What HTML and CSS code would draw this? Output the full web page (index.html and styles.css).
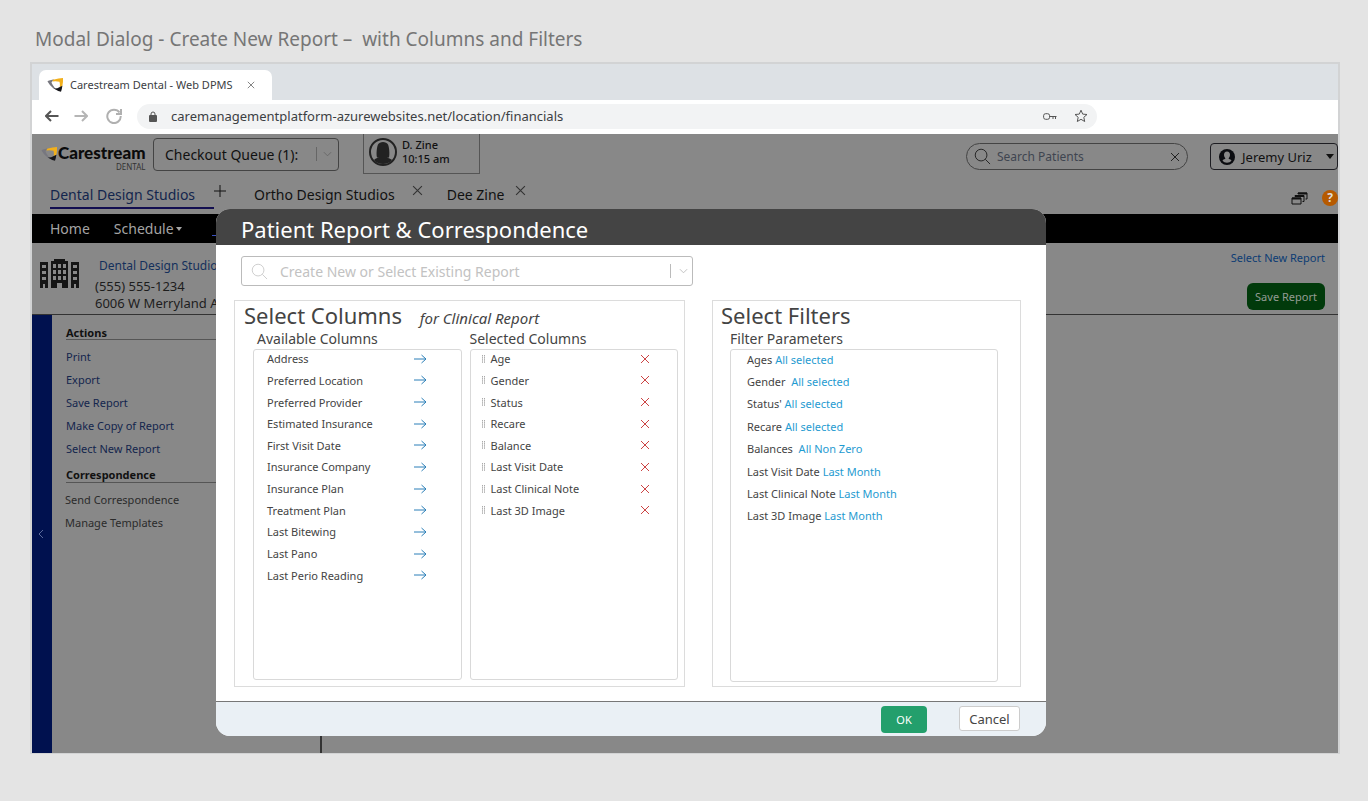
FILE: index.html
```html
<!DOCTYPE html>
<html lang="en">
<head>
<meta charset="utf-8">
<title>Carestream Dental - Web DPMS</title>
<link rel="stylesheet" href="styles.css">
</head>
<body>
<svg class="defs" aria-hidden="true">
  <symbol id="mark" viewBox="0 0 17 14"><path d="M.5 3.500Q.5 2.500 7 1.200L4.500 4.200Q4.800 6 9 11.500L6.500 10.500Q2 6.500.5 3.500z" class="mark-grey"/><path d="M6 1.700Q12 .3 16 0 16.300 4 15.300 8l-2.500 1.500Q13.300 6 12.500 3.700 9 3 5.500 3.500z" class="mark-gold"/><path d="M12.800 9 15.400 7.700Q15 11 14 13.800 10.500 13 6.800 10.500 10 10.800 12.800 9z" class="mark-dark"/></symbol>
  <symbol id="arrow" viewBox="0 0 14 10"><path d="M1 5h12M8.500 1 13 5 8.500 9"/></symbol>
  <symbol id="cross" viewBox="0 0 10 10"><path d="m1 1 8 8M9 1 1 9"/></symbol>
  <symbol id="chevron" viewBox="0 0 10 6"><path d="m1 1 4 4 4-4"/></symbol>
  <symbol id="lens" viewBox="0 0 18 18"><circle cx="7.500" cy="7.500" r="6.200"/><path d="m12 12 5 5"/></symbol>
  <symbol id="grip" viewBox="0 0 5 8"><path d="M1.500 0v8M3.500 0v8" stroke-dasharray="1.500 .6"/></symbol>
</svg>

<h1 class="page-title">Modal Dialog - Create New Report – &nbsp;with Columns and Filters</h1>

<div class="browser">
  <div class="tabstrip">
    <div class="browser-tab">
      <svg class="mark"><use href="#mark"/></svg>
      <span>Carestream Dental - Web DPMS</span>
      <button class="icon-btn" aria-label="Close tab"><svg class="tab-close"><use href="#cross"/></svg></button>
    </div>
  </div>
  <div class="toolbar">
    <button class="icon-btn" aria-label="Back"><svg class="nav-ico" viewBox="0 0 14 12"><path d="M13.500 6H1M6 1 1 6l5 5"/></svg></button>
    <button class="icon-btn" aria-label="Forward"><svg class="nav-ico faint" viewBox="0 0 14 12"><path d="M.5 6H13M8 1l5 5-5 5"/></svg></button>
    <button class="icon-btn" aria-label="Reload"><svg class="reload" viewBox="0 0 16 16"><path d="M13.500 4.500A6.700 6.700 0 1 0 14.700 8"/><path d="M15 1v5h-5"/></svg></button>
    <div class="address">
      <svg class="lock" viewBox="0 0 8 11"><rect y="4" width="8" height="7" rx="1"/><path d="M2 4.500V3a2 2 0 0 1 4 0v1.500"/></svg>
      <input class="url" aria-label="Address" value="caremanagementplatform-azurewebsites.net/location/financials">
      <svg class="key" viewBox="0 0 14 7"><rect x=".6" y=".7" width="6" height="5.600" rx="2"/><path d="M6.500 3.500h7M10 3.500V6M12.500 3.500V6"/></svg>
      <svg class="star" viewBox="0 0 14 14"><path d="m7 1.200 1.700 3.900 4.300.4-3.200 2.800.9 4.200L7 10.300l-3.700 2.200.9-4.200L1 5.500l4.300-.4z"/></svg>
    </div>
  </div>

  <div class="app">
    <header class="topbar">
      <div class="logo">
        <svg class="mark"><use href="#mark"/></svg>
        <div class="logo-text"><b>Carestream</b><small>DENTAL</small></div>
      </div>
      <div class="queue">
        <select aria-label="Checkout queue"><option>Checkout Queue (1):</option></select>
        <svg class="chev"><use href="#chevron"/></svg>
      </div>
      <div class="patient">
        <svg class="avatar" viewBox="0 0 28 28"><circle cx="14" cy="14" r="13"/><path class="solid" d="M8 19.500c-1-4 0-11 1-13 1.500-3.500 8.500-3.500 10 0 1 2 2 9 1 13l-2 .3c3 .6 4.500 1.700 5 2.200-4 5.300-14 5.300-18 0 1-1.200 2.500-1.800 5-2.200z"/></svg>
        <div>D. Zine<br>10:15 am</div>
      </div>
      <div class="search">
        <svg class="lens"><use href="#lens"/></svg>
        <input type="text" aria-label="Search patients" placeholder="Search Patients">
        <button class="icon-btn" aria-label="Clear"><svg class="x10"><use href="#cross"/></svg></button>
      </div>
      <button class="user">
        <svg class="user-ico" viewBox="0 0 16 16"><circle cx="8" cy="8" r="8"/><path d="M8 2.500c2 0 3 1.400 3 3.300 0 1.500-.6 2.700-1.400 3.400 0 1 2.400 1.200 2.900 2.300-2 3-7 3-9 0 .5-1.100 2.900-1.300 2.900-2.300C5.600 8.500 5 7.300 5 5.800c0-1.900 1-3.300 3-3.300z"/></svg>
        <span>Jeremy Uriz</span><i class="caret"></i>
      </button>
    </header>

    <div class="tabs">
      <a href="#" class="tab current">Dental Design Studios</a>
      <button class="icon-btn mini" aria-label="Add tab"><svg class="plus" viewBox="0 0 12 12"><path d="M6 0v12M0 6h12"/></svg></button>
      <a href="#" class="tab second">Ortho Design Studios</a>
      <button class="icon-btn mini" aria-label="Close Ortho Design Studios"><svg class="x11"><use href="#cross"/></svg></button>
      <a href="#" class="tab third">Dee Zine</a>
      <button class="icon-btn mini" aria-label="Close Dee Zine"><svg class="x11"><use href="#cross"/></svg></button>
      <div class="tools">
        <button class="icon-btn" aria-label="Windows"><svg class="windows" viewBox="0 0 17 13"><path d="M1 6h9v6H1z"/><path d="M4 4.500V3.500h9v6h-1.500M7 2V1h9v6h-1.500"/><path class="bar" d="M1 6.500h9M4 4h9M7 1.500h9"/></svg></button>
        <button class="help" aria-label="Help">?</button>
      </div>
    </div>

    <nav class="menu"><a href="#">Home</a><a href="#">Schedule<i class="caret"></i></a><a href="#" class="menu-current" aria-label="Current section"></a></nav>

    <section class="office">
      <svg class="building" viewBox="0 0 39 30"><path d="M0 3h8v26H5v-4H3v4H0zM11 2h3V0h11v2h3v27h-6v-5h-5v5h-6zM31 3h8v26h-3v-4h-2v4h-3z"/><path class="panes" d="M2 6h4v3H2zM2 12h4v3H2zM2 18h4v3H2zM13 5h3v4h-3zM18 5h3v4h-3zM23 5h3v4h-3zM13 11h3v4h-3zM18 11h3v4h-3zM23 11h3v4h-3zM13 17h3v4h-3zM18 17h3v4h-3zM23 17h3v4h-3zM33 6h4v3h-4zM33 12h4v3h-4zM33 18h4v3h-4z"/></svg>
      <address><a href="#">Dental Design Studios</a>(555) 555-1234<br>6006 W Merryland Ave</address>
      <div class="office-actions"><a href="#">Select New Report</a><button class="save">Save Report</button></div>
    </section>

    <div class="work">
      <button class="rail" aria-label="Collapse panel"><svg class="rail-ico" viewBox="0 0 6 10"><path d="M5 1 1 5l4 4"/></svg></button>
      <aside class="side">
        <h2>Actions</h2>
        <a href="#">Print</a><a href="#">Export</a><a href="#">Save Report</a><a href="#">Make Copy of Report</a><a href="#">Select New Report</a>
        <h2>Correspondence</h2>
        <a href="#" class="plain">Send Correspondence</a><a href="#" class="plain">Manage Templates</a>
      </aside>
    </div>

    <div class="dialog" role="dialog" aria-labelledby="dialog-title">
      <h2 class="dialog-title" id="dialog-title">Patient Report &amp; Correspondence</h2>
      <div class="dialog-body">
        <div class="report-pick">
          <svg class="lens"><use href="#lens"/></svg>
          <input type="text" aria-label="Report" placeholder="Create New or Select Existing Report">
          <button class="icon-btn" aria-label="Show reports"><svg class="chev"><use href="#chevron"/></svg></button>
        </div>
        <div class="panels">
          <section class="panel columns">
            <h3>Select Columns <em>for Clinical Report</em></h3>
            <div class="lists">
              <div class="group">
                <h4>Available Columns</h4>
                <div class="box">
                  <ul class="available">
                    <li>Address<button class="icon-btn" aria-label="Add Address"><svg><use href="#arrow"/></svg></button></li>
                    <li>Preferred Location<button class="icon-btn" aria-label="Add Preferred Location"><svg><use href="#arrow"/></svg></button></li>
                    <li>Preferred Provider<button class="icon-btn" aria-label="Add Preferred Provider"><svg><use href="#arrow"/></svg></button></li>
                    <li>Estimated Insurance<button class="icon-btn" aria-label="Add Estimated Insurance"><svg><use href="#arrow"/></svg></button></li>
                    <li>First Visit Date<button class="icon-btn" aria-label="Add First Visit Date"><svg><use href="#arrow"/></svg></button></li>
                    <li>Insurance Company<button class="icon-btn" aria-label="Add Insurance Company"><svg><use href="#arrow"/></svg></button></li>
                    <li>Insurance Plan<button class="icon-btn" aria-label="Add Insurance Plan"><svg><use href="#arrow"/></svg></button></li>
                    <li>Treatment Plan<button class="icon-btn" aria-label="Add Treatment Plan"><svg><use href="#arrow"/></svg></button></li>
                    <li>Last Bitewing<button class="icon-btn" aria-label="Add Last Bitewing"><svg><use href="#arrow"/></svg></button></li>
                    <li>Last Pano<button class="icon-btn" aria-label="Add Last Pano"><svg><use href="#arrow"/></svg></button></li>
                    <li>Last Perio Reading<button class="icon-btn" aria-label="Add Last Perio Reading"><svg><use href="#arrow"/></svg></button></li>
                  </ul>
                </div>
              </div>
              <div class="group">
                <h4>Selected Columns</h4>
                <div class="box">
                  <ul class="selected">
                    <li><svg class="grip"><use href="#grip"/></svg>Age<button class="icon-btn" aria-label="Remove Age"><svg><use href="#cross"/></svg></button></li>
                    <li><svg class="grip"><use href="#grip"/></svg>Gender<button class="icon-btn" aria-label="Remove Gender"><svg><use href="#cross"/></svg></button></li>
                    <li><svg class="grip"><use href="#grip"/></svg>Status<button class="icon-btn" aria-label="Remove Status"><svg><use href="#cross"/></svg></button></li>
                    <li><svg class="grip"><use href="#grip"/></svg>Recare<button class="icon-btn" aria-label="Remove Recare"><svg><use href="#cross"/></svg></button></li>
                    <li><svg class="grip"><use href="#grip"/></svg>Balance<button class="icon-btn" aria-label="Remove Balance"><svg><use href="#cross"/></svg></button></li>
                    <li><svg class="grip"><use href="#grip"/></svg>Last Visit Date<button class="icon-btn" aria-label="Remove Last Visit Date"><svg><use href="#cross"/></svg></button></li>
                    <li><svg class="grip"><use href="#grip"/></svg>Last Clinical Note<button class="icon-btn" aria-label="Remove Last Clinical Note"><svg><use href="#cross"/></svg></button></li>
                    <li><svg class="grip"><use href="#grip"/></svg>Last 3D Image<button class="icon-btn" aria-label="Remove Last 3D Image"><svg><use href="#cross"/></svg></button></li>
                  </ul>
                </div>
              </div>
            </div>
          </section>
          <section class="panel filters">
            <h3>Select Filters</h3>
            <h4>Filter Parameters</h4>
            <div class="box">
              <ul class="params">
                <li>Ages <a href="#">All selected</a></li>
                <li>Gender &nbsp;<a href="#">All selected</a></li>
                <li>Status' <a href="#">All selected</a></li>
                <li>Recare <a href="#">All selected</a></li>
                <li>Balances &nbsp;<a href="#">All Non Zero</a></li>
                <li>Last Visit Date <a href="#">Last Month</a></li>
                <li>Last Clinical Note <a href="#">Last Month</a></li>
                <li>Last 3D Image <a href="#">Last Month</a></li>
              </ul>
            </div>
          </section>
        </div>
      </div>
      <footer class="dialog-foot"><button class="ok">OK</button><button class="cancel">Cancel</button></footer>
    </div>
  </div>
</div>
</body>
</html>
```
FILE: styles.css
```css
* { box-sizing: border-box; }
body {
  margin: 0;
  min-height: 100vh;
  padding: 24px 28px 47px 30px;
  display: flex;
  flex-direction: column;
  background: #e4e4e4;
  font-family: "Noto Sans", "Open Sans", sans-serif;
  font-size: 12px;
  color: #111;
}
h1, h2, h3, h4, ul { margin: 0; padding: 0; font-weight: 400; }
ul { list-style: none; }
a { color: inherit; text-decoration: none; }
button, input, select { font: inherit; color: inherit; margin: 0; padding: 0; border: 0; background: none; outline: 0; min-width: 0; }
svg { fill: none; stroke: currentColor; flex: none; display: block; }
.defs { position: absolute; width: 0; height: 0; }
.icon-btn { display: flex; align-items: center; flex: none; }

.page-title { padding-left: 5px; font-size: 19px; line-height: 30px; color: #767676; margin-bottom: 8px; }

.browser { flex: 1; display: flex; flex-direction: column; border: 2px solid #d2d3d4; border-bottom-width: 1px; background: #fff; }
.tabstrip { height: 36px; background: #dde1e5; padding: 6px 0 0 7px; display: flex; }
.browser-tab { display: flex; align-items: center; width: 233px; padding: 0 17px 1px 8px; background: #fff; border-radius: 7px 7px 0 0; font-size: 11px; color: #3c4043; white-space: nowrap; }
.mark { width: 17px; height: 14px; margin-right: 6px; }
.mark-grey { fill: #77777f; stroke: none; }
.mark-gold { fill: #f2b01c; stroke: none; }
.mark-dark { fill: #15151a; stroke: none; }
.browser-tab .icon-btn { margin-left: auto; }
.tab-close { width: 8px; height: 8px; color: #666; }
.toolbar { height: 34px; display: flex; align-items: center; padding: 0 0 2px 13px; color: #555; }
.nav-ico { width: 14px; height: 12px; margin-right: 15px; stroke-width: 2; }
.faint { color: #b5b5b5; }
.reload { width: 16px; height: 16px; margin: 0 15px 0 3px; color: #b0b0b0; stroke-width: 2; }
.address { display: flex; align-items: center; width: 960px; height: 25px; padding: 0 9px 0 12px; border-radius: 13px; background: #f2f3f4; }
.lock { width: 8px; height: 11px; }
.lock rect { fill: #555; stroke: none; }
.url { flex: 1; margin-left: 14px; font-size: 13px; color: #3c4043; }
.key { width: 14px; height: 7px; margin-right: 17px; }
.star { width: 14px; height: 14px; stroke-width: 1; }

.app { position: relative; flex: 1; display: flex; flex-direction: column; background: #888; overflow: hidden; }
.topbar { display: flex; height: 40px; padding-left: 9px; align-items: flex-start; }
.logo { display: flex; align-items: flex-start; padding-top: 10px; width: 112px; }
.logo .mark { margin: 3px 0 0; }
.logo .mark-gold { fill: #a8741a; }
.logo-text { display: flex; flex-direction: column; align-items: flex-end; color: #0b0b0b; }
.logo-text b { font-family: Lato, sans-serif; font-weight: 900; font-size: 17px; line-height: 18px; }
.logo-text small { font-size: 8px; line-height: 9px; color: #333; }
.queue { display: flex; align-items: center; width: 186px; height: 33px; margin-top: 4px; padding: 0 6px 1px 11px; border: 1px solid #444; border-radius: 4px; font-size: 14px; }
.queue select { appearance: none; flex: 1; }
.chev { width: 16px; height: 14px; padding: 4px 0 4px 6px; border-left: 1px solid #666; color: #666; }
.patient { display: flex; gap: 5px; align-items: center; width: 117px; height: 40px; margin-left: 24px; padding: 0 5px 3px; border: 1px solid #555; border-top: 0; font-weight: 500; font-size: 11px; line-height: 14px; }
.avatar { width: 28px; height: 28px; stroke-width: 2; color: #222; }
.solid { fill: #222; stroke: none; }
.search { display: flex; align-items: center; width: 222px; height: 27px; margin: 9px 22px 0 auto; padding: 0 7px; border: 1px solid #444; border-radius: 14px; }
.search .lens { width: 17px; height: 17px; margin-right: 6px; color: #222; }
.search input { flex: 1; }
input::placeholder { color: #3f4550; opacity: 1; }
.x10 { width: 10px; height: 10px; color: #222; }
.user { display: flex; align-items: center; gap: 7px; width: 128px; height: 27px; margin-top: 9px; padding: 0 3px 0 8px; border: 1px solid #1d1d22; border-radius: 4px; font-size: 13px; }
.user-ico { width: 16px; height: 16px; }
.user-ico circle { fill: #0b0c10; stroke: none; }
.user-ico path { fill: #888; stroke: none; }
.user .caret { margin-left: auto; }
.caret { display: inline-block; border: 4px solid transparent; border-top: 5px solid currentColor; border-bottom: 0; }
.tabs { display: flex; align-items: flex-start; height: 40px; padding: 9px 0 0 18px; font-size: 14px; line-height: 24px; white-space: nowrap; }
.current { width: 164px; height: 26px; border-bottom: 2px solid #130f50; color: #13254d; }
.second { margin-left: 28px; }
.third { margin-left: 24px; }
.mini { margin-top: 2px; }
.plus { width: 12px; height: 12px; }
.x11 { width: 11px; height: 11px; margin-left: 17px; color: #333; }
.third + .mini .x11 { margin-left: 10px; }
.tools { display: flex; align-items: center; gap: 14px; height: 30px; margin-left: auto; }
.windows { width: 17px; height: 13px; }
.windows .bar { stroke-width: 2; }
.help { width: 16px; height: 16px; border-radius: 8px; background: #b65a00; color: #ddd; font-size: 12px; line-height: 16px; font-weight: 700; }
.menu { display: flex; align-items: center; gap: 24px; height: 29px; padding-left: 18px; background: #000; color: #a4a4a4; font-size: 14px; }
.menu .caret { margin: 0 0 3px 2px; border-width: 4px 3px 0; }
.menu-current { width: 60px; height: 14px; margin-left: 6px; border-bottom: 1px solid #3a50c0; }
.office { display: flex; height: 72px; padding: 14px 13px 0 8px; border-bottom: 1px solid #333; }
.building { width: 39px; height: 32px; margin-top: 1px; }
.building path { fill: #151515; stroke: none; }
.building .panes { fill: #888; }
.office address { margin-left: 16px; font-style: normal; font-size: 13px; line-height: 17px; color: #1d1d1d; white-space: nowrap; }
.office address a { display: block; padding-left: 4px; margin-bottom: 4px; font-size: 12px; color: #14305c; }
.office-actions { display: flex; flex-direction: column; align-items: flex-end; gap: 17px; margin-left: auto; margin-top: -8px; font-size: 11px; }
.office-actions a { color: #0c3c74; line-height: 16px; padding-top: 1px; }
.save { width: 78px; height: 27px; border-radius: 6px; background: #013a0b; color: #949c94; font-size: 11px; }
.work { flex: 1; display: flex; }
.rail { width: 20px; background: #00114f; color: #5b6a9b; padding-left: 6px; }
.rail-ico { width: 6px; height: 10px; }
.side { width: 270px; padding: 7px 0 0 14px; border-right: 2px solid #333; font-size: 11px; color: #13254d; }
.side h2 { height: 18px; margin-bottom: 5px; border-bottom: 1px solid #555; font-size: 11px; line-height: 22px; font-weight: 700; color: #111; }
.side a { display: block; height: 23px; line-height: 23px; }
.side h2 ~ h2 { margin: 5px 0; line-height: 20px; }
.side .plain { margin-left: -1px; color: #2b2b2b; }

.dialog { position: absolute; top: 75px; left: 184px; right: 292px; border-radius: 14px; overflow: hidden; background: #fff; color: #444; }
.dialog-title { height: 36px; padding-left: 25px; background: #444; color: #fff; font-size: 22px; line-height: 40px; white-space: nowrap; }
.dialog-body { padding: 11px 25px 14px 18px; }
.report-pick { display: flex; align-items: center; width: 452px; height: 30px; margin: 0 0 14px 7px; padding: 0 4px 0 9px; border: 1px solid #bbb; border-radius: 3px; font-size: 14px; }
.report-pick .lens { width: 17px; height: 17px; margin-right: 12px; color: #ccc; }
.report-pick input { flex: 1; }
.report-pick input::placeholder { color: #c2c2c2; }
.report-pick .chev { width: 18px; color: #bbb; border-color: #bbb; padding-left: 8px; }
.panels { display: grid; grid-template-columns: 451fr 309fr; gap: 27px; }
.panel { border: 1px solid #dcdcdc; padding: 0 6px 6px 18px; }
.panel h3 { margin-left: -9px; font-size: 22px; line-height: 28px; height: 28px; white-space: nowrap; }
.panel h3 em { margin-left: 12px; font-size: 15px; }
.panel h4 { padding-left: 4px; font-size: 14px; line-height: 19px; height: 20px; }
.lists { display: grid; grid-template-columns: 1fr 1fr; gap: 8px; }
.group:last-child h4 { padding-left: 0; }
.box { height: 331px; border: 1px solid #d9d9d9; border-radius: 3px; font-size: 11px; }
.filters { padding: 0 22px 4px 17px; }
.filters h4 { padding-left: 0; }
.filters .box { height: 333px; }
.box li { display: flex; align-items: center; white-space: pre; }
.box ul { display: grid; grid-auto-rows: 1fr; margin-top: -2px; }
.box li .icon-btn { margin-left: auto; }
.available { height: 238px; padding: 0 34px 0 13px; }
.available svg { width: 14px; height: 10px; color: #2b7fb8; }
.selected { height: 173px; padding: 0 27px 0 10px; }
.selected svg { width: 10px; height: 10px; color: #cc4444; }
.selected .grip { width: 5px; height: 8px; margin-right: 5px; color: #aaa; }
.params { height: 179px; padding-left: 16px; }
.params a { color: #1f9bd1; }
.dialog-foot { display: flex; justify-content: flex-end; align-items: flex-start; gap: 32px; height: 35px; padding: 4px 26px 0; border-top: 1px solid #777; background: #eaf0f5; }
.ok { width: 46px; height: 27px; border-radius: 4px; background: #239f6c; color: #fff; font-size: 11px; }
.cancel { width: 61px; height: 25px; border: 1px solid #ccc; border-radius: 3px; background: #fff; font-size: 13px; }
```
